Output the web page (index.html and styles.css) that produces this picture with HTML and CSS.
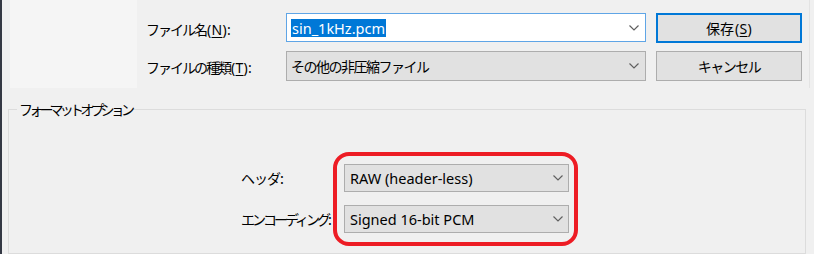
FILE: index.html
```html
<!DOCTYPE html>
<html lang="ja">
<head>
    <meta charset="UTF-8">
    <meta name="viewport" content="width=device-width, initial-scale=1.0">
    <title>名前を付けて保存</title>
    <link rel="stylesheet" href="styles.css">
</head>
<body>
    <div class="window">
        <div class="top">
            <div class="nav-pane"></div>
            <div class="file-form">
                <label class="field-label">ファイル名<span class="key">(<u>N</u>):</span></label>
                <div class="combo combo-edit">
                    <span class="selected latin">sin_1kHz.pcm</span>
                    <svg class="chevron" width="10" height="6" viewBox="0 0 10 6"><polyline points="0.5,0.5 5,5 9.5,0.5"/></svg>
                </div>
                <button class="btn btn-default">保存<span class="key">(<u>S</u>)</span></button>

                <label class="field-label">ファイルの種類<span class="key">(<u>T</u>):</span></label>
                <div class="combo">
                    <span class="combo-ja">その他の非圧縮ファイル</span>
                    <svg class="chevron" width="10" height="6" viewBox="0 0 10 6"><polyline points="0.5,0.5 5,5 9.5,0.5"/></svg>
                </div>
                <button class="btn btn-cancel">キャンセル</button>
            </div>
        </div>

        <fieldset class="group">
            <legend>フォーマットオプション</legend>
            <div class="options">
                <div class="opt-labels">
                    <span>ヘッダ:</span>
                    <span class="tight">エンコーディング:</span>
                </div>
                <div class="ring">
                    <div class="combo combo-sm">
                        <span class="latin">RAW (header-less)</span>
                        <svg class="chevron" width="10" height="6" viewBox="0 0 10 6"><polyline points="0.5,0.5 5,5 9.5,0.5"/></svg>
                    </div>
                    <div class="combo combo-sm">
                        <span class="latin">Signed 16-bit PCM</span>
                        <svg class="chevron" width="10" height="6" viewBox="0 0 10 6"><polyline points="0.5,0.5 5,5 9.5,0.5"/></svg>
                    </div>
                </div>
            </div>
        </fieldset>
    </div>
</body>
</html>
```

FILE: styles.css
```css
/* Dialog base */
body {
    margin: 0;
    background-color: #f0f0f0;
    color: #000;
    font-family: "Noto Sans CJK JP", "Noto Sans", sans-serif;
    font-size: 14px;
}

.latin {
    font-family: "Noto Sans", sans-serif;
    font-size: 14.5px;
    letter-spacing: 0;
}

/* accelerator part "(N):" keeps normal spacing */
.key {
    font-family: "Noto Sans", sans-serif;
    letter-spacing: 0.3px;
    margin-left: 1px;
}

.window {
    height: 254px;
    box-sizing: border-box;
    border-left: 2px solid #343844;
    display: flex;
    flex-direction: column;
    overflow: hidden;
}

/* Upper area: file name / type */
.top {
    display: flex;
    height: 88px;
    margin-left: 8px;
    margin-right: 4px;
    border-right: 1px solid #e3e3e3;
}

.nav-pane {
    width: 127px;
    flex: none;
    background-color: #f5f5f5;
}

.file-form {
    display: grid;
    grid-template-columns: 130px 360px 146px;
    grid-auto-rows: 30px;
    column-gap: 10px;
    row-gap: 8px;
    padding: 13px 0 0 9px;
    align-content: start;
}

.field-label {
    align-self: center;
    padding-top: 2px;
    white-space: nowrap;
    letter-spacing: -2px;
}

u {
    text-underline-offset: 2px;
}

/* Combo boxes */
.combo {
    display: flex;
    align-items: center;
    justify-content: space-between;
    box-sizing: border-box;
    background-color: #e1e1e1;
    border: 1px solid #adadad;
    padding: 0 6px 0 4px;
    white-space: nowrap;
}

.combo-ja {
    letter-spacing: -1.5px;
}

.combo-edit {
    height: 29px;
    background-color: #fff;
    border-color: #5fa5e6;
}

.selected {
    background-color: #0078d7;
    color: #fff;
    line-height: 18px;
    padding: 0 1px;
}

.chevron {
    flex: none;
}

.chevron polyline {
    fill: none;
    stroke: #606060;
    stroke-width: 1.2;
}

.combo-sm {
    height: 28px;
    padding: 0 5px 0 5px;
}

/* Buttons */
.btn {
    font: inherit;
    color: #000;
    background-color: #e1e1e1;
    border: 1px solid #adadad;
    padding: 0;
    margin: 0;
}

.btn-default {
    border: 2px solid #0078d7;
}

.btn-cancel {
    letter-spacing: -1.5px;
}

/* Group box */
.group {
    flex: 1;
    margin: 11px 8px 0 6px;
    padding: 0;
    border: 1px solid #dcdcdc;
    min-width: 0;
}

.group legend {
    margin-left: 8px;
    padding: 0 2px;
    line-height: 20px;
    letter-spacing: -3.8px;
}

.options {
    display: flex;
    margin-top: 33px;
    padding-left: 232px;
}

.opt-labels {
    display: flex;
    flex-direction: column;
    gap: 13px;
    width: 92px;
    padding-top: 12px;
    letter-spacing: -1px;
}

.opt-labels span {
    line-height: 28px;
    white-space: nowrap;
}

.opt-labels .tight {
    letter-spacing: -3px;
}

/* Red annotation ring */
.ring {
    display: flex;
    flex-direction: column;
    gap: 13px;
    width: 225px;
    padding: 8px 5px 9px 7px;
    border: 4px solid #ed1c24;
    border-radius: 16px;
}
```
